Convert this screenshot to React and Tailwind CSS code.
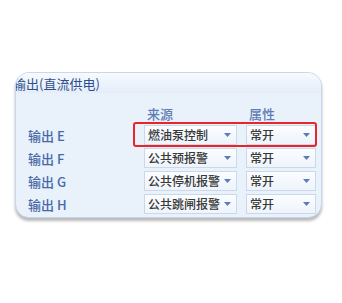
import React from "react";

const rows = [
  { label: "输出 E", src: "燃油泵控制", attr: "常开" },
  { label: "输出 F", src: "公共预报警", attr: "常开" },
  { label: "输出 G", src: "公共停机报警", attr: "常开" },
  { label: "输出 H", src: "公共跳闸报警", attr: "常开" },
];

function Arrow() {
  return (
    <svg width="7" height="4" viewBox="0 0 7 4" className="shrink-0">
      <path d="M0 0 L7 0 L3.5 4 Z" fill="#5b7cb8" />
    </svg>
  );
}

function Drop({ text, w }) {
  return (
    <div
      className={`${w} h-[20px] flex items-center justify-between pl-[3px] pr-[5px] border border-[#cbd8ea] bg-gradient-to-b from-[#fbfdff] to-[#eef4fb] text-[12px] font-medium text-[#383838] leading-none overflow-hidden whitespace-nowrap`}
    >
      <span>{text}</span>
      <Arrow />
    </div>
  );
}

export default function App() {
  return (
    <div
      className="w-[342px] h-[303px] bg-white relative overflow-hidden"
      style={{ fontFamily: '"Noto Sans CJK SC", "Noto Sans", sans-serif' }}
    >
      <div className="absolute left-[15px] top-[72px] w-[307px] h-[146px] rounded-[14px] border border-[#c8d7ec] bg-[#e9f1fb] overflow-hidden shadow-[0_3px_3px_rgba(0,0,0,0.28)]">
        <div className="h-[20px] bg-gradient-to-b from-[#f7faff] to-[#e3edf9] flex items-center -ml-[3px] text-[13px] text-[#2f4f8c] leading-none whitespace-nowrap">
          输出(直流供电)
        </div>
        <div className="pt-[12px]">
          <div className="flex h-[16px] items-center text-[13px] font-medium text-[#5f7db4] leading-none">
            <div className="w-[131px]" />
            <div className="w-[102px]">来源</div>
            <div>属性</div>
          </div>
          <div className="flex flex-col gap-[3px] mt-[4px]">
            {rows.map((r) => (
              <div key={r.label} className="flex items-center h-[20px]">
                <div className="w-[128px] pl-[12px] text-[13px] font-medium text-[#4668a8] leading-none whitespace-nowrap">
                  {r.label}
                </div>
                <Drop text={r.src} w="w-[93px]" />
                <div className="w-[9px]" />
                <Drop text={r.attr} w="w-[70px]" />
              </div>
            ))}
          </div>
        </div>
      </div>
      <div className="absolute left-[133px] top-[122px] w-[184px] h-[25px] border-2 border-[#e8252a] rounded-[3px]" />
    </div>
  );
}
